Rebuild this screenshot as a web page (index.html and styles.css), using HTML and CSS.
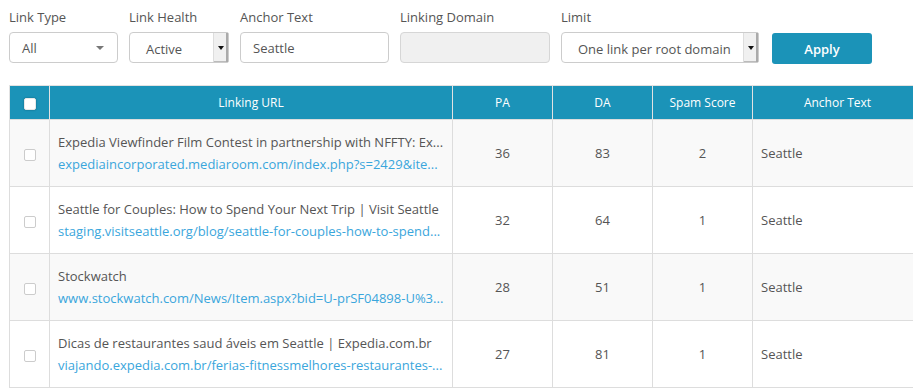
FILE: index.html
```html
<!DOCTYPE html>
<html lang="en">
<head>
    <meta charset="UTF-8">
    <meta name="viewport" content="width=device-width, initial-scale=1.0">
    <title>Inbound Links</title>
    <link rel="stylesheet" href="styles.css">
</head>
<body>
    <form class="filters">
        <div class="field">
            <label>Link Type</label>
            <div class="select select-type">
                <span>All</span>
                <span class="caret"></span>
            </div>
        </div>
        <div class="field">
            <label>Link Health</label>
            <div class="select select-native select-health">
                <span>Active</span>
                <span class="arrow-box"><span class="caret dark"></span></span>
            </div>
        </div>
        <div class="field">
            <label>Anchor Text</label>
            <div class="input input-anchor">Seattle</div>
        </div>
        <div class="field">
            <label>Linking Domain</label>
            <div class="input input-domain disabled"></div>
        </div>
        <div class="field">
            <label>Limit</label>
            <div class="select select-native select-limit">
                <span>One link per root domain</span>
                <span class="arrow-box"><span class="caret dark"></span></span>
            </div>
        </div>
        <div class="field">
            <label>&nbsp;</label>
            <button type="button" class="apply">Apply</button>
        </div>
    </form>

    <table class="links">
        <colgroup>
            <col class="col-check">
            <col class="col-url">
            <col class="col-num">
            <col class="col-num">
            <col class="col-num">
            <col class="col-anchor">
        </colgroup>
        <thead>
            <tr>
                <th><span class="check head-check"></span></th>
                <th>Linking URL</th>
                <th>PA</th>
                <th>DA</th>
                <th>Spam Score</th>
                <th>Anchor Text</th>
            </tr>
        </thead>
        <tbody>
            <tr>
                <td class="c"><span class="check"></span></td>
                <td>
                    <div class="title">Expedia Viewfinder Film Contest in partnership with NFFTY: Ex...</div>
                    <div class="url">expediaincorporated.mediaroom.com/index.php?s=2429&amp;ite...</div>
                </td>
                <td class="c">36</td>
                <td class="c">83</td>
                <td class="c">2</td>
                <td>Seattle</td>
            </tr>
            <tr>
                <td class="c"><span class="check"></span></td>
                <td>
                    <div class="title">Seattle for Couples: How to Spend Your Next Trip | Visit Seattle</div>
                    <div class="url">staging.visitseattle.org/blog/seattle-for-couples-how-to-spend...</div>
                </td>
                <td class="c">32</td>
                <td class="c">64</td>
                <td class="c">1</td>
                <td>Seattle</td>
            </tr>
            <tr>
                <td class="c"><span class="check"></span></td>
                <td>
                    <div class="title">Stockwatch</div>
                    <div class="url">www.stockwatch.com/News/Item.aspx?bid=U-prSF04898-U%3...</div>
                </td>
                <td class="c">28</td>
                <td class="c">51</td>
                <td class="c">1</td>
                <td>Seattle</td>
            </tr>
            <tr>
                <td class="c"><span class="check"></span></td>
                <td>
                    <div class="title">Dicas de restaurantes saud áveis em Seattle | Expedia.com.br</div>
                    <div class="url">viajando.expedia.com.br/ferias-fitnessmelhores-restaurantes-...</div>
                </td>
                <td class="c">27</td>
                <td class="c">81</td>
                <td class="c">1</td>
                <td>Seattle</td>
            </tr>
        </tbody>
    </table>
</body>
</html>
```

FILE: styles.css
```css
body {
    margin: 0;
    padding: 8px 0 0 9px;
    font-family: "Open Sans", Arial, sans-serif;
    font-size: 13px;
    color: #555;
    background: #fff;
    overflow: hidden;
}

.filters {
    display: flex;
    gap: 11px;
}

.field label {
    display: block;
    line-height: 18px;
    margin-bottom: 6px;
    color: #555;
}

.select,
.input {
    box-sizing: border-box;
    height: 31px;
    border: 1px solid #ccc;
    border-radius: 4px;
    background: #fff;
    display: flex;
    align-items: center;
    color: #555;
}

.select-type {
    width: 109px;
    padding: 0 12px;
    justify-content: space-between;
}

.caret {
    width: 0;
    height: 0;
    border-left: 4px solid transparent;
    border-right: 4px solid transparent;
    border-top: 4px solid #777;
    margin-right: 1px;
}

.caret.dark {
    border-left-width: 3px;
    border-right-width: 3px;
    border-top-color: #111;
    margin: 0;
}

.select-native {
    border-radius: 4px 2px 2px 4px;
    padding-left: 16px;
    justify-content: space-between;
    align-items: stretch;
}

.select-native > span:first-child {
    display: flex;
    align-items: center;
    padding-top: 2px;
}

.arrow-box {
    width: 13px;
    background: #f0f0f0;
    border-left: 1px solid #ddd;
    box-shadow: inset -2px 0 0 #aaa, inset 0 -1px 0 #bbb;
    display: flex;
    align-items: center;
    justify-content: center;
    padding-right: 1px;
}

.select-health {
    width: 100px;
}

.select-limit {
    width: 198px;
}

.input {
    width: 149px;
    padding: 0 12px;
}

.input-domain {
    width: 150px;
}

.input.disabled {
    background: #f0f0f0;
    border-color: #d6d6d6;
}

.filters .field:last-child {
    margin-left: 2px;
}

.apply {
    width: 100px;
    height: 31px;
    margin-top: 1px;
    border: none;
    border-radius: 3px;
    background: #1b93b8;
    color: #fff;
    font-family: "Open Sans", Arial, sans-serif;
    font-size: 13px;
    font-weight: 600;
    cursor: pointer;
}

.links {
    margin-top: 21px;
    border-collapse: collapse;
    table-layout: fixed;
    width: 913px;
}

.col-check { width: 40px; }
.col-url { width: 403px; }
.col-num { width: 100px; }
.col-anchor { width: 170px; }

.links th {
    background: #1b93b8;
    color: #fff;
    font-weight: 500;
    font-size: 12px;
    height: 33px;
    padding: 0;
    border: 1px solid #e2e2e2;
    border-bottom: none;
    text-align: center;
}

.links td {
    border: 1px solid #ddd;
    padding: 12px 8px;
    vertical-align: middle;
    height: 40px;
}

.links tbody tr:nth-child(odd) td {
    background: #f9f9f9;
}

.links td.c {
    text-align: center;
}

.title {
    line-height: 20px;
    margin-bottom: 2px;
    white-space: nowrap;
    color: #555;
}

.url {
    line-height: 20px;
    white-space: nowrap;
    color: #3aa6dc;
}

.check {
    display: inline-block;
    box-sizing: border-box;
    width: 12px;
    height: 12px;
    border: 1px solid #ccc;
    border-radius: 2px;
    background: #fff;
    vertical-align: middle;
}

.head-check {
    border-color: #e8e8e8;
    box-shadow: 0 0 2px rgba(0, 0, 0, 0.35);
}
```
